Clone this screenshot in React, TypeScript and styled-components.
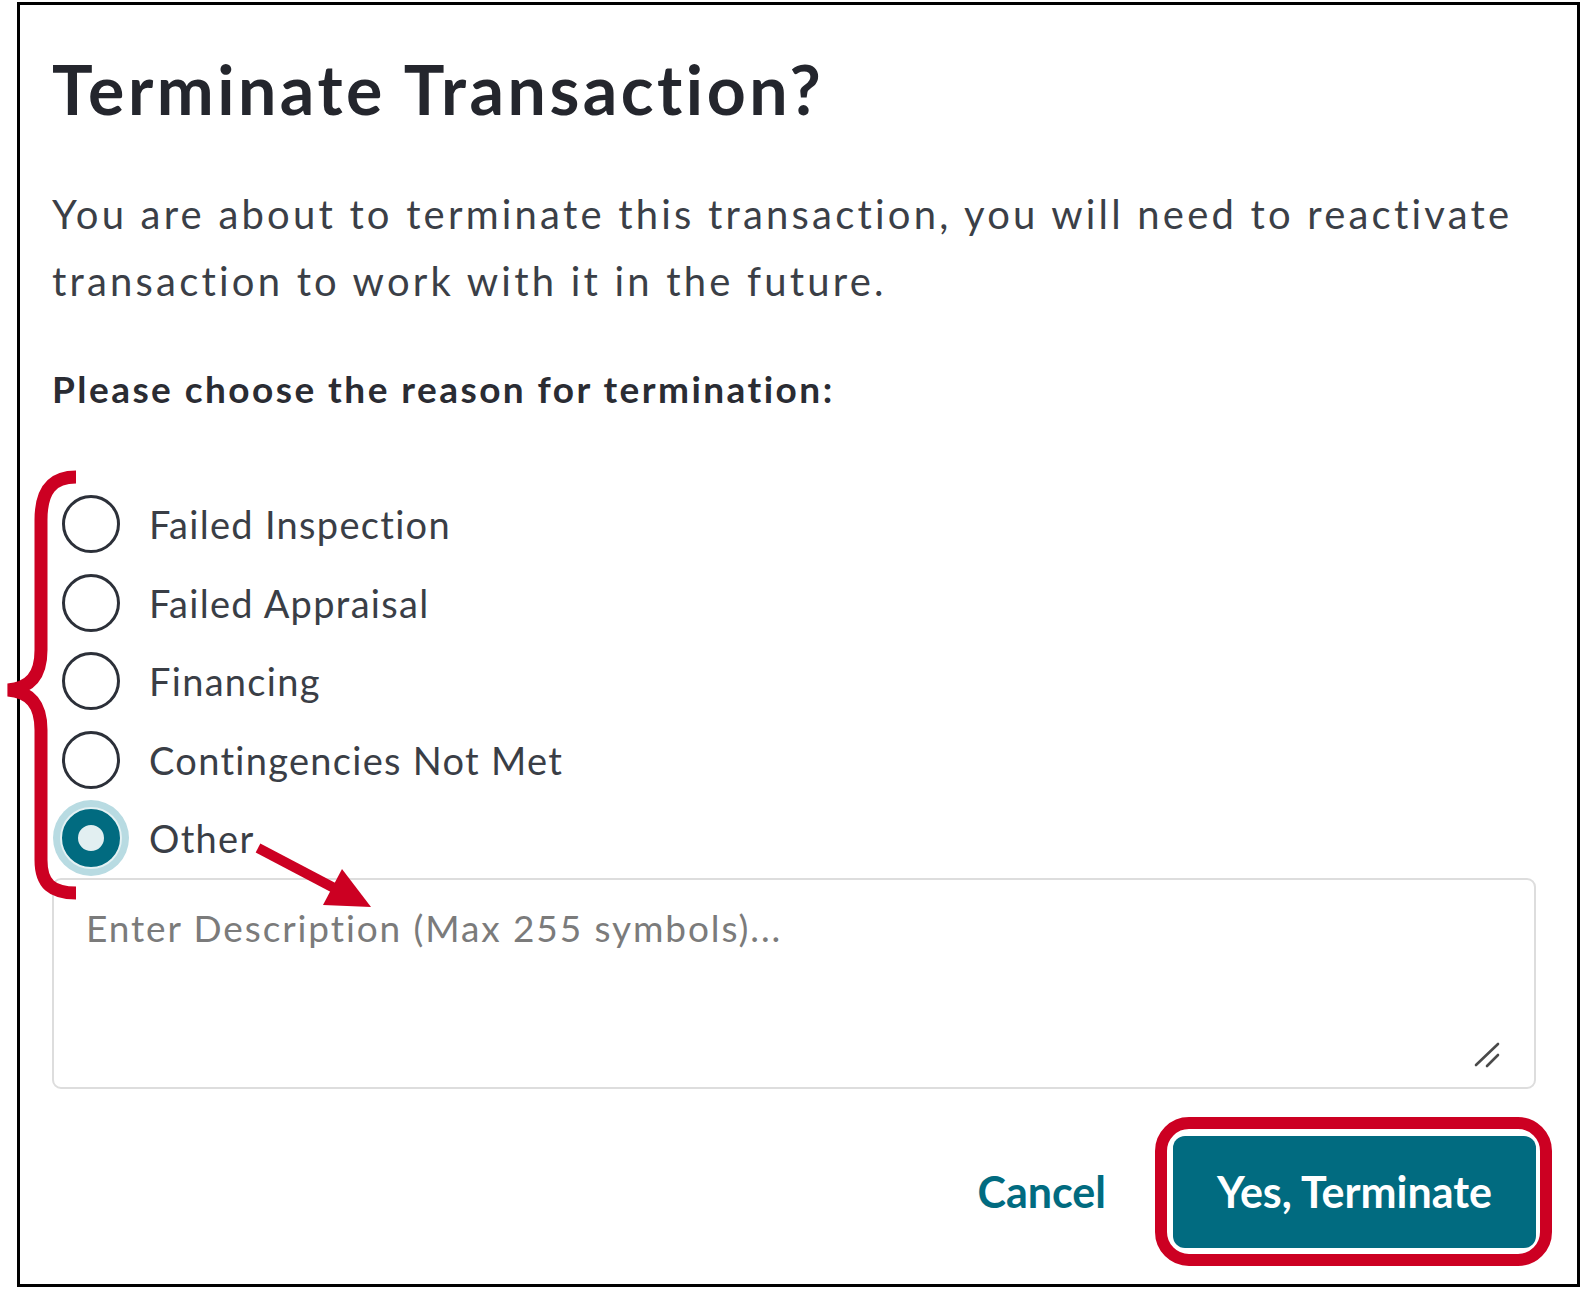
import styled, { createGlobalStyle } from 'styled-components';

const GlobalStyle = createGlobalStyle`
  html, body {
    margin: 0;
    padding: 0;
    background: #ffffff;
  }
  body {
    font-family: Lato, "Liberation Sans", sans-serif;
  }
  *, *::before, *::after {
    box-sizing: border-box;
  }
`;

const TEAL = '#016b80';
const RED = '#cc0022';

const Frame = styled.div`
  position: relative;
  width: 1563px;
  height: 1285px;
  margin: 2px 0 0 17px;
  border: 3px solid #000;
  padding: 44px 41px 0 32px;
  display: flex;
  flex-direction: column;
`;

const Title = styled.h1`
  margin: 0;
  font-size: 68px;
  line-height: 80px;
  font-weight: 700;
  letter-spacing: 3.5px;
  color: #24262d;
`;

const Message = styled.p`
  margin: 52px 0 0;
  font-size: 40px;
  line-height: 67px;
  font-weight: 400;
  letter-spacing: 3.2px;
  color: #3b3f47;
`;

const Prompt = styled.h3`
  margin: 53px 0 0;
  font-size: 37px;
  line-height: 42px;
  font-weight: 700;
  letter-spacing: 2.45px;
  color: #2a2c33;
`;

const Options = styled.div`
  margin-top: 75px;
  display: flex;
  flex-direction: column;
`;

const Option = styled.label`
  height: 78.5px;
  display: flex;
  align-items: center;
  gap: 20px;
  cursor: pointer;
  input {
    display: none;
  }
`;

const Indicator = styled.span<{ $checked?: boolean }>`
  flex-shrink: 0;
  width: 77px;
  height: 77px;
  display: flex;
  align-items: center;
  justify-content: center;
  &::before {
    content: '';
    flex-shrink: 0;
    width: 58px;
    height: 58px;
    border-radius: 50%;
    border: ${(p) => (p.$checked ? `16px solid ${TEAL}` : '3.5px solid #2c3039')};
    background: ${(p) => (p.$checked ? '#e2eff1' : '#fff')};
    box-shadow: ${(p) => (p.$checked ? '0 0 0 2px #e4f1f3, 0 0 0 9px #b8dbe2' : 'none')};
  }
`;

const OptionText = styled.span`
  font-size: 38px;
  line-height: 48px;
  letter-spacing: 1.3px;
  color: #3a3e46;
`;

const Field = styled.div`
  position: relative;
  height: 211px;
`;

const Description = styled.textarea`
  width: 100%;
  height: 100%;
  resize: none;
  border: 2px solid #dddddd;
  border-radius: 9px;
  padding: 26px 32px;
  font-family: Lato, "Liberation Sans", sans-serif;
  font-size: 37px;
  line-height: 44px;
  letter-spacing: 1.9px;
  color: #333;
  outline: none;
  &::placeholder {
    color: #7b7b7b;
  }
`;

const Grip = styled.svg`
  position: absolute;
  right: 36px;
  bottom: 21px;
  pointer-events: none;
`;

const Footer = styled.div`
  margin-top: 47px;
  display: flex;
  justify-content: flex-end;
  align-items: center;
  gap: 67px;
`;

const CancelButton = styled.button`
  background: none;
  border: none;
  padding: 0;
  font-family: Lato, "Liberation Sans", sans-serif;
  font-size: 43px;
  font-weight: 700;
  color: ${TEAL};
  cursor: pointer;
`;

const Highlight = styled.div`
  position: relative;
  &::before {
    content: '';
    position: absolute;
    inset: -19px -16px -18px -18px;
    border: 12px solid ${RED};
    border-radius: 34px;
    pointer-events: none;
  }
`;

const TerminateButton = styled.button`
  width: 363px;
  height: 112px;
  border: none;
  border-radius: 12px;
  background: ${TEAL};
  color: #fff;
  font-family: Lato, "Liberation Sans", sans-serif;
  font-size: 43px;
  font-weight: 700;
  cursor: pointer;
`;

const Brace = styled.svg`
  position: absolute;
  left: -18px;
  top: 460px;
  overflow: visible;
`;

const Arrow = styled.svg`
  position: absolute;
  left: 230px;
  top: 835px;
  overflow: visible;
`;

const reasons = [
  'Failed Inspection',
  'Failed Appraisal',
  'Financing',
  'Contingencies Not Met',
  'Other',
];

const App = () => {
  const selected = 'Other';
  return (
    <>
      <GlobalStyle />
      <Frame>
        <Title>Terminate Transaction?</Title>
        <Message>
          You are about to terminate this transaction, you will need to reactivate
          transaction to work with it in the future.
        </Message>
        <Prompt>Please choose the reason for termination:</Prompt>

        <Options>
          {reasons.map((r) => (
            <Option key={r}>
              <input type='radio' name='reason' defaultChecked={r === selected} />
              <Indicator $checked={r === selected} />
              <OptionText>{r}</OptionText>
            </Option>
          ))}
        </Options>

        <Field>
          <Description placeholder='Enter Description (Max 255 symbols)...' />
          <Grip width='26' height='26' viewBox='0 0 26 26'>
            <g stroke='#4a4a4a' strokeWidth='2.6' strokeLinecap='round'>
              <line x1='2' y1='23' x2='24' y2='2' />
              <line x1='13' y1='24' x2='24' y2='13' />
            </g>
          </Grip>
        </Field>

        <Footer>
          <CancelButton>Cancel</CancelButton>
          <Highlight>
            <TerminateButton>Yes, Terminate</TerminateButton>
          </Highlight>
        </Footer>

        <Brace width='80' height='440' viewBox='2 465 80 440'>
          <path
            d='M 76 477 C 52 477, 41 490, 41 520 L 41 650 C 41 676, 30 688, 8 690 C 30 692, 41 704, 41 730 L 41 860 C 41 884, 52 893, 76 893'
            fill='none'
            stroke={RED}
            strokeWidth='13'
          />
        </Brace>

        <Arrow width='125' height='75' viewBox='250 840 125 75'>
          <line x1='258' y1='848' x2='336' y2='889' stroke={RED} strokeWidth='10' />
          <polygon points='371,907 323,905 342,869' fill={RED} />
        </Arrow>
      </Frame>
    </>
  );
};

export default App;
